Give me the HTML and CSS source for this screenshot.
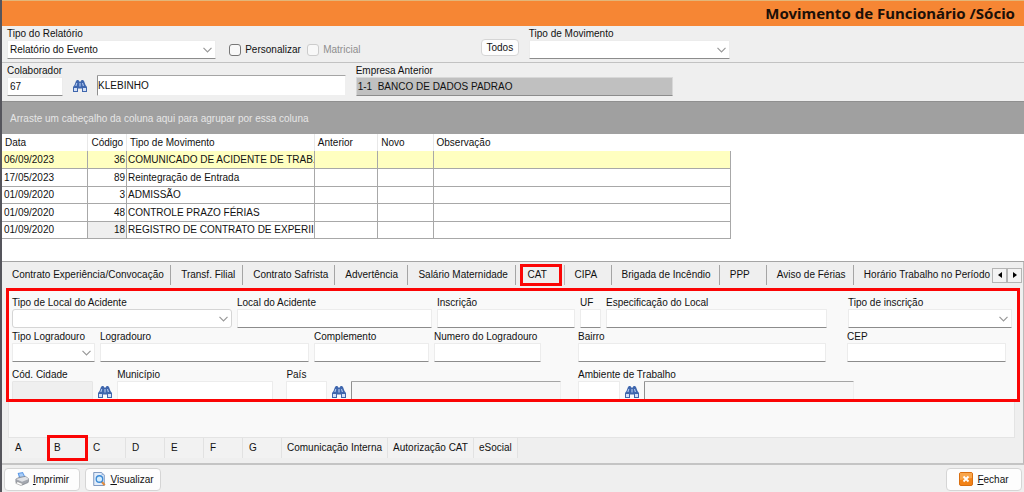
FILE: index.html
```html
<!DOCTYPE html>
<html lang="pt-BR">
<head>
  <meta charset="UTF-8">
  <meta name="viewport" content="width=device-width, initial-scale=1.0">
  <title>Movimento de Funcionário /Sócio</title>
  <link rel="stylesheet" href="styles.css">
</head>
<body>
  <svg class="defs" aria-hidden="true">
    <symbol id="binoculars" viewBox="0 0 14 12">
      <path d="M3 1l1-1h1.500l.7 1.500h1.600L8.500 0H10l1 1 1.500 4L14 7v5H9V8.500H5V12H0V7l1.500-2z" fill="#3f66ad"/>
      <path d="M1 8h3v3H1zM10 8h3v3h-3z" fill="#d3e0f7"/>
      <path d="M3.300 3h1L3.500 6H2.300zM9 3h1l1 3H9.800z" fill="#b4caf0"/>
      <path d="M6.300 3h1.400v3.500H6.300z" fill="#9db6e2"/>
    </symbol>
  </svg>

  <header class="title">
    <h1>Movimento de Funcionário /Sócio</h1>
  </header>

  <form class="toolbar report">
    <div class="field">
      <label for="tipoRelatorio">Tipo do Relatório</label>
      <select id="tipoRelatorio"><option>Relatório do Evento</option></select>
    </div>
    <label class="check"><input type="checkbox"> Personalizar</label>
    <label class="check off"><input type="checkbox" disabled> Matricial</label>
    <button type="button" class="btn todos">Todos</button>
    <div class="field movimento">
      <label for="tipoMovimento">Tipo de Movimento</label>
      <select id="tipoMovimento"><option></option></select>
    </div>
  </form>

  <form class="toolbar employee">
    <div class="field">
      <label for="colaborador">Colaborador</label>
      <input type="text" id="colaborador" value="67">
    </div>
    <button type="button" class="find" aria-label="Buscar colaborador"><svg><use href="#binoculars"/></svg></button>
    <input type="text" class="sunken" aria-label="Nome" value="KLEBINHO">
    <div class="field">
      <label for="empresa">Empresa Anterior</label>
      <input type="text" id="empresa" class="gray" value="1-1  BANCO DE DADOS PADRAO" readonly>
    </div>
  </form>

  <div class="group-bar">Arraste um cabeçalho da coluna aqui para agrupar por essa coluna</div>

  <div class="grid-area">
    <table>
      <colgroup>
        <col class="c-data"><col class="c-codigo"><col class="c-tipo"><col class="c-anterior"><col class="c-novo"><col class="c-obs">
      </colgroup>
      <thead>
        <tr><th>Data</th><th>Código</th><th>Tipo de Movimento</th><th>Anterior</th><th>Novo</th><th>Observação</th></tr>
      </thead>
      <tbody>
        <tr class="selected"><td>06/09/2023</td><td>36</td><td>COMUNICADO DE ACIDENTE DE TRAB.</td><td></td><td></td><td></td></tr>
        <tr><td>17/05/2023</td><td>89</td><td>Reintegração de Entrada</td><td></td><td></td><td></td></tr>
        <tr><td>01/09/2020</td><td>3</td><td>ADMISSÃO</td><td></td><td></td><td></td></tr>
        <tr><td>01/09/2020</td><td>48</td><td>CONTROLE PRAZO FÉRIAS</td><td></td><td></td><td></td></tr>
        <tr><td>01/09/2020</td><td class="focus">18</td><td>REGISTRO DE CONTRATO DE EXPERII</td><td></td><td></td><td></td></tr>
      </tbody>
    </table>
  </div>

  <main>
    <nav class="tabs">
      <a href="#">Contrato Experiência/Convocação</a>
      <a href="#">Transf. Filial</a>
      <a href="#">Contrato Safrista</a>
      <a href="#">Advertência</a>
      <a href="#">Salário Maternidade</a>
      <a href="#" class="marked">CAT</a>
      <a href="#">CIPA</a>
      <a href="#">Brigada de Incêndio</a>
      <a href="#">PPP</a>
      <a href="#">Aviso de Férias</a>
      <a href="#">Horário Trabalho no Período</a>
      <div class="scroll">
        <button type="button" aria-label="Anterior"><svg viewBox="0 0 4 6"><path d="M4 0v6L0 3z"/></svg></button>
        <button type="button" aria-label="Próximo"><svg viewBox="0 0 4 6"><path d="M0 0v6l4-3z"/></svg></button>
      </div>
    </nav>

    <form class="accident">
      <div class="row place">
        <div class="field"><label for="tipoLocal">Tipo de Local do Acidente</label><select id="tipoLocal" class="flat"><option></option></select></div>
        <div class="field"><label for="local">Local do Acidente</label><input type="text" id="local"></div>
        <div class="field"><label for="inscricao">Inscrição</label><input type="text" id="inscricao"></div>
        <div class="field"><label for="uf">UF</label><input type="text" id="uf"></div>
        <div class="field"><label for="espec">Especificação do Local</label><input type="text" id="espec"></div>
        <div class="field last"><label for="tipoInsc">Tipo de inscrição</label><select id="tipoInsc"><option></option></select></div>
      </div>
      <div class="row address">
        <div class="field"><label for="tipoLog">Tipo Logradouro</label><select id="tipoLog"><option></option></select></div>
        <div class="field"><label for="logradouro">Logradouro</label><input type="text" id="logradouro"></div>
        <div class="field"><label for="complemento">Complemento</label><input type="text" id="complemento"></div>
        <div class="field"><label for="numero">Numero do Logradouro</label><input type="text" id="numero"></div>
        <div class="field bairro"><label for="bairro">Bairro</label><input type="text" id="bairro"></div>
        <div class="field last"><label for="cep">CEP</label><input type="text" id="cep"></div>
      </div>
      <div class="row city">
        <div class="field"><label for="cidade">Cód. Cidade</label><input type="text" id="cidade" disabled></div>
        <button type="button" class="find" aria-label="Buscar cidade"><svg><use href="#binoculars"/></svg></button>
        <div class="field"><label for="municipio">Município</label><input type="text" id="municipio"></div>
        <div class="field pais"><label for="pais">País</label><input type="text" id="pais"></div>
        <button type="button" class="find" aria-label="Buscar país"><svg><use href="#binoculars"/></svg></button>
        <input type="text" class="sunken" aria-label="Nome do país" readonly>
        <div class="field ambiente"><label for="ambiente">Ambiente de Trabalho</label><input type="text" id="ambiente"></div>
        <button type="button" class="find" aria-label="Buscar ambiente"><svg><use href="#binoculars"/></svg></button>
        <input type="text" class="sunken" aria-label="Nome do ambiente" readonly>
      </div>
    </form>

    <div class="blank"></div>

    <nav class="subtabs">
      <a href="#">A</a>
      <a href="#" class="marked">B</a>
      <a href="#">C</a>
      <a href="#">D</a>
      <a href="#">E</a>
      <a href="#">F</a>
      <a href="#">G</a>
      <a href="#" class="wide">Comunicação Interna</a>
      <a href="#" class="wide">Autorização CAT</a>
      <a href="#" class="wide">eSocial</a>
    </nav>
  </main>

  <footer>
    <button type="button" class="btn">
      <svg viewBox="0 0 16 16">
        <path d="M3 1l6-1 3 6-7 2z" fill="#5f9be8"/>
        <path d="M4.500 2l4-.6 2 4L6 6.500z" fill="#a9cdf7"/>
        <path d="M1 8l4-2 7-1 4 3-1 4-7 3-7-3z" fill="#a4a8b0" stroke="#777b84" stroke-width=".7"/>
        <path d="M1 8l7 3 8-3-4-2.500L5 7z" fill="#e0e2e6"/>
        <path d="M3 11l6 2.500-2 2L1 13z" fill="#fff" stroke="#888" stroke-width=".6"/>
      </svg>
      <span><u>I</u>mprimir</span>
    </button>
    <button type="button" class="btn">
      <svg viewBox="0 0 16 16">
        <path d="M2 .5h9l3 3v12H2z" fill="#e3edfa" stroke="#6a88b5"/>
        <path d="M11 .5v3h3z" fill="#9db6da"/>
        <path d="M11 11l3.500 4" stroke="#e08a3c" stroke-width="2.500"/>
        <circle cx="8.500" cy="8" r="3.700" fill="#d6edfc" stroke="#3b8ad6" stroke-width="1.500"/>
      </svg>
      <span><u>V</u>isualizar</span>
    </button>
    <button type="button" class="btn close">
      <svg viewBox="0 0 14 14">
        <rect x=".5" y=".5" width="13" height="13" rx="1.500" fill="#f28318" stroke="#d96f10"/>
        <path d="M1 1h12v5L1 8z" fill="#f9a64b"/>
        <path d="M4.500 4.500l5 5M9.500 4.500l-5 5" stroke="#fff" stroke-width="1.800"/>
      </svg>
      <span><u>F</u>echar</span>
    </button>
  </footer>
</body>
</html>
```
FILE: styles.css
```css
* { box-sizing: border-box; margin: 0; padding: 0; }
body { font-family: "Liberation Sans", Arial, sans-serif; font-size: 10px; line-height: 13px; color: #111; background: #efefef; border-left: 2px solid #55555c; min-height: 100vh; display: flex; flex-direction: column; }
a { color: inherit; text-decoration: none; }
input, select, button { font: inherit; color: inherit; }
button { cursor: pointer; }
.defs { position: absolute; width: 0; height: 0; }

.title { height: 26px; background: #f68634; border-top: 1px solid #e3b679; text-align: right; padding-right: 9px; }
.title h1 { font-family: "Noto Sans", "Open Sans", sans-serif; font-size: 15px; line-height: 25px; color: #1c1008; }

.field { display: flex; flex-direction: column; min-width: 0; }
.field label { white-space: nowrap; }
input[type="text"], select { width: 100%; min-width: 0; height: 19px; padding: 0 2px; background-color: #fff; border: 1px solid #ececec; border-bottom-color: #8c8c8c; border-radius: 1px; outline: none; }
select { appearance: none; padding-right: 16px; background-image: url("data:image/svg+xml,%3Csvg xmlns='http://www.w3.org/2000/svg' width='9' height='6'%3E%3Cpath d='M.5 .8l4 4 4-4' fill='none' stroke='%23999' stroke-width='1.200'/%3E%3C/svg%3E"); background-repeat: no-repeat; background-position: right 3px center; }
input[type="text"].sunken { border-color: #a5a5a5 #efefef #efefef #8f8f8f; padding: 0; }
input[type="text"].gray { background: #c0c0c0; border-color: #d8d8d8; border-bottom-color: #8c8c8c; padding-left: 1px; white-space: pre; }
input[type="text"]:disabled { background: #efefef; border-color: #e6e6e6; }
.find { width: 14px; height: 12px; border: 0; background: none; }
.find svg { display: block; width: 14px; height: 12px; }
.btn { background: #fdfdfd; border: 1px solid #d5d5d5; border-radius: 4px; white-space: nowrap; }

.toolbar { display: grid; column-gap: 10px; padding-left: 5px; align-items: end; }
.report { grid-template-columns: 210fr 71px 50px 104fr 38px 202fr 285fr; height: 37px; padding-bottom: 3px; border-bottom: 1px solid #c2c2c2; }
.check { display: flex; align-items: center; gap: 4px; height: 19px; white-space: nowrap; padding-left: 3px; }
.check input { appearance: none; flex: none; width: 12px; height: 12px; background: #f8f8f8; border: 1px solid #777; border-radius: 3px; }
.check.off { color: #8e8e8e; padding-left: 0; }
.check.off input { border-color: #ccc; }
.todos { grid-column: 5; height: 17px; margin-bottom: 3px; }
.movimento { grid-column: 6; }
.employee { grid-template-columns: 56fr 14px 248fr 317fr 340fr; height: 38px; padding-bottom: 5px; }
.employee .find { margin-bottom: 4px; }
.employee .sunken { height: 21px; }

.group-bar { height: 33px; line-height: 34px; padding-left: 8px; background: #a0a0a0; color: #e6e6e6; border-top: 1px solid #8f8f8f; }

.grid-area { background: #fff; height: 128px; border-bottom: 1px solid #a5a5a5; }
table { width: 71.300%; height: 105px; border-collapse: collapse; table-layout: fixed; }
th, td { height: 17px; text-align: left; font-weight: normal; white-space: nowrap; overflow: hidden; border-right: 1px solid #a8a8a8; padding: 0 2px; }
th { padding: 0 0 0 3px; border-right-color: #e8e8e8; }
th:last-child { border-right: 0; }
td { border-bottom: 1px solid #a8a8a8; }
td:nth-child(2) { text-align: right; padding-right: 1px; }
td:nth-child(3) { padding: 0 0 0 1px; }
.selected td { background: #ffffc0; }
.focus { background: #efefef; }
.c-data { width: 11.800%; }
.c-codigo { width: 5.300%; }
.c-tipo { width: 25.800%; }
.c-anterior { width: 8.700%; }
.c-novo { width: 7.600%; }

main { display: flex; flex-direction: column; border-right: 1px solid #bbb; border-bottom: 2px solid #c4c4c4; }
.tabs { display: grid; grid-template-columns: 169fr 72fr 92fr 73fr 107fr 49fr 47fr 108fr 47fr 87fr 138fr 31px; height: 26px; align-items: center; background: #efefef; }
.tabs a { position: relative; min-width: 0; height: 20px; line-height: 20px; padding-left: 10px; border-right: 1px solid #a5a5a5; white-space: nowrap; }
.tabs a:nth-of-type(11) { border-right: 0; }
.tabs .marked { border-right-color: #bbb; padding-left: 12px; }
.marked::after { content: ""; position: absolute; z-index: 1; border: 3px solid #fb0505; }
.tabs .marked::after { inset: -1px 2px -1px 4px; }
.scroll { display: flex; }
.scroll button { width: 15px; height: 15px; border: 1px solid #b5b5b5; background: #f3f3f3; display: flex; align-items: center; justify-content: center; }
.scroll svg { width: 4px; height: 6px; }

.accident { margin: 0 3px 0 4px; height: 114px; padding: 5px 5px 0 3px; border: 3px solid #fb0505; background: #f9f9f9; overflow: hidden; }
.row { display: grid; column-gap: 5px; margin-bottom: 2px; align-items: end; }
.place { grid-template-columns: 220fr 195fr 138fr 21fr 221fr 180fr; }
.address { grid-template-columns: 83fr 209fr 115fr 107fr 280fr 175fr; padding-right: 6px; }
.city { grid-template-columns: 80fr 14px 154fr 48fr 14px 207fr 53fr 14px 207fr 151fr; margin-top: 6px; }
.place .last, .address .last { padding-left: 16px; }
.bairro { padding-left: 32px; }
.pais { padding-left: 8px; }
.ambiente { padding-left: 12px; }
.city .find { margin-bottom: 2px; }
.city .sunken { background: #f7f7f7; }
.flat { border-color: #d5d5d5; border-radius: 3px; }

.blank { height: 36px; margin: 0 8px 0 6px; background: #f9f9f9; border: 1px solid #e4e4e4; border-top: 0; }
.subtabs { display: flex; height: 25px; padding-left: 7px; }
.subtabs a { position: relative; width: 39px; height: 20px; line-height: 20px; padding-left: 6px; border-right: 1px solid #e2e2e2; background: #f2f2f2; white-space: nowrap; }
.subtabs .wide { width: auto; padding: 0 5px; }
.subtabs .marked::after { inset: -3px -2px -3px -1px; }

footer { display: flex; align-items: center; gap: 5px; flex: 1; padding: 2px 2px 1px 2px; }
footer .btn { width: 76px; height: 23px; display: flex; align-items: center; justify-content: center; gap: 4px; }
footer svg { width: 14px; height: 14px; }
footer .close { margin-left: auto; }
```
